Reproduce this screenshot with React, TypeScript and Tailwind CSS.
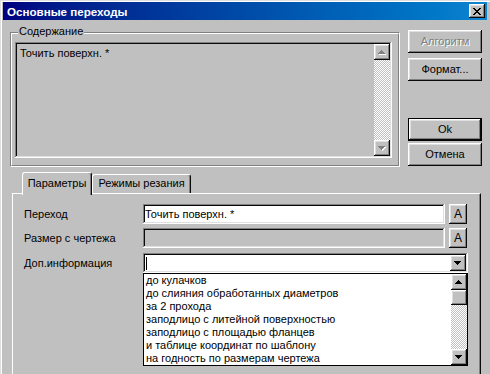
import React from "react";

const raised =
  "shadow-[inset_-1px_-1px_#0a0a0a,inset_1px_1px_#ffffff,inset_-2px_-2px_#808080,inset_2px_2px_#dfdfdf]";
const sunken =
  "shadow-[inset_-1px_-1px_#ffffff,inset_1px_1px_#808080,inset_-2px_-2px_#dfdfdf,inset_2px_2px_#0a0a0a]";
const checker =
  "bg-[image:repeating-conic-gradient(#c0c0c0_0%_25%,#ffffff_0%_50%)] bg-[length:2px_2px]";

const Arrow = ({ dir, disabled }: { dir: "up" | "down"; disabled?: boolean }) => {
  const rows = dir === "up" ? [3, 2, 1, 0] : [0, 1, 2, 3];
  const shape = (dx: number, dy: number, fill: string) =>
    rows.map((inset, i) => (
      <rect key={`${fill}-${i}`} x={inset + dx} y={i + dy} width={7 - inset * 2} height={1} fill={fill} />
    ));
  return (
    <svg width="8" height="5" viewBox="0 0 8 5" shapeRendering="crispEdges">
      {disabled && shape(1, 1, "#ffffff")}
      {shape(0, 0, disabled ? "#808080" : "#000000")}
    </svg>
  );
};

const ScrollButton = ({ dir, disabled }: { dir: "up" | "down"; disabled?: boolean }) => (
  <div className={`flex h-[16px] w-[16px] shrink-0 items-center justify-center bg-[#c0c0c0] ${raised}`}>
    <Arrow dir={dir} disabled={disabled} />
  </div>
);

const Button = ({
  children,
  disabled,
  primary,
  className = "",
}: {
  children: React.ReactNode;
  disabled?: boolean;
  primary?: boolean;
  className?: string;
}) => (
  <div className={`h-[23px] w-[74px] ${primary ? "border border-black" : ""} ${className}`}>
    <div
      className={`flex h-full w-full items-center justify-center bg-[#c0c0c0] ${raised} ${
        disabled ? "text-[#808080] [text-shadow:1px_1px_#ffffff]" : ""
      }`}
    >
      {children}
    </div>
  </div>
);

const items = [
  "до кулачков",
  "до слияния обработанных диаметров",
  "за 2 прохода",
  "заподлицо с литейной поверхностью",
  "заподлицо с площадью фланцев",
  "и таблице координат по шаблону",
  "на годность по размерам чертежа",
];

export default function App() {
  return (
    <div className="h-[374px] w-[490px] overflow-hidden bg-[#c0c0c0] font-['Liberation_Sans',Arial,sans-serif] text-[11px] leading-[13px] text-black">
      <div className="h-full border-l border-t border-[#dfdfdf]">
        <div className="h-full border-l border-t border-white pl-px">
          {/* title bar */}
          <div className="mr-[3px] flex h-[18px] items-center justify-between bg-linear-to-r from-[#000080] to-[#1084d0] pl-[4px] pr-[2px]">
            <span className="text-[11.6px] font-bold text-white">Основные переходы</span>
            <div className={`flex h-[14px] w-[16px] items-center justify-center bg-[#c0c0c0] ${raised}`}>
              <svg width="8" height="7" viewBox="0 0 8 7" shapeRendering="crispEdges">
                <path d="M0 0h2v1h1v1h2V1h1V0h2v1H7v1H6v1H5v1h1v1h1v1h1v1H6V6H5V5H3v1H2v1H0V6h1V5h1V4h1V3H2V2H1V1H0z" fill="#000" />
              </svg>
            </div>
          </div>

          <div className="flex">
            {/* group box */}
            <div className="relative ml-[7px] mt-[12px] h-[135px] w-[390px] border border-b-white border-l-[#808080] border-r-white border-t-[#808080]">
              <div className="h-full w-full border border-b-[#808080] border-l-white border-r-[#808080] border-t-white pl-[3px] pt-[8px]">
                <div className={`flex h-[116px] w-[377px] p-[2px] ${sunken}`}>
                  <div className="flex-1 pl-[3px] pt-[3px]">Точить поверхн. *</div>
                  <div className="flex w-[16px] flex-col">
                    <ScrollButton dir="up" disabled />
                    <div className={`flex-1 ${checker}`} />
                    <ScrollButton dir="down" disabled />
                  </div>
                </div>
              </div>
              <span className="absolute left-[7px] top-[-8px] bg-[#c0c0c0] px-px">Содержание</span>
            </div>

            {/* buttons */}
            <div className="ml-[8px] mt-[10px] flex flex-col">
              <Button disabled>Алгоритм</Button>
              <Button className="mt-[5px]">Формат...</Button>
              <Button primary className="mt-[37px]">
                Ok
              </Button>
              <Button className="mt-[2px]">Отмена</Button>
            </div>
          </div>

          {/* tabs */}
          <div className="ml-[9px] mt-[5px]">
            <div className="flex h-[21px] items-end pl-[10px]">
              <div className="relative z-10 -mb-[2px] flex h-[23px] w-[70px] items-start justify-center rounded-t-[3px] border-l border-r border-t border-l-white border-r-[#0a0a0a] border-t-white bg-[#c0c0c0] pt-[4px] shadow-[inset_-1px_0_#808080]">
                Параметры
              </div>
              <div className="flex h-[19px] w-[99px] items-start justify-center rounded-t-[3px] border-l border-r border-t border-l-white border-r-[#0a0a0a] border-t-white pt-[2px] shadow-[inset_-1px_0_#808080]">
                Режимы резания
              </div>
            </div>
            <div className="h-[200px] w-[469px] border-l border-r border-t border-l-white border-r-[#0a0a0a] border-t-white pt-[10px] shadow-[inset_-1px_0_#808080]">
              <div className="flex h-[20px] items-center">
                <div className="w-[130px] pl-[11px]">Переход</div>
                <div className={`flex h-[20px] w-[302px] items-center bg-white px-[2px] ${sunken}`}>
                  Точить поверхн. *
                </div>
                <div className={`ml-[4px] flex h-[20px] w-[18px] items-center justify-center text-[12px] ${raised}`}>
                  A
                </div>
              </div>
              <div className="mt-[4px] flex h-[20px] items-center">
                <div className="w-[130px] pl-[11px]">Размер с чертежа</div>
                <div className={`h-[20px] w-[302px] bg-[#c0c0c0] ${sunken}`} />
                <div className={`ml-[4px] flex h-[20px] w-[18px] items-center justify-center text-[12px] ${raised}`}>
                  A
                </div>
              </div>
              <div className="mt-[5px] flex h-[20px] items-center">
                <div className="w-[130px] pl-[11px]">Доп.информация</div>
                <div className={`relative flex h-[20px] w-[325px] items-center bg-white p-[2px] ${sunken}`}>
                  <div className="flex flex-1 items-center pl-px">
                    <span className="h-[13px] w-px bg-black" />
                  </div>
                  <ScrollButton dir="down" />
                  <div className="absolute left-0 top-full z-20 flex h-[93px] w-[325px] border border-black bg-white">
                    <div className="flex-1 pl-[2px]">
                      {items.map((t) => (
                        <div key={t} className="h-[13px] whitespace-nowrap">
                          {t}
                        </div>
                      ))}
                    </div>
                    <div className="flex w-[16px] flex-col">
                      <ScrollButton dir="up" />
                      <div className={`h-[15px] shrink-0 bg-[#c0c0c0] ${raised}`} />
                      <div className={`flex-1 ${checker}`} />
                      <ScrollButton dir="down" />
                    </div>
                  </div>
                </div>
              </div>
            </div>
          </div>
        </div>
      </div>
    </div>
  );
}
